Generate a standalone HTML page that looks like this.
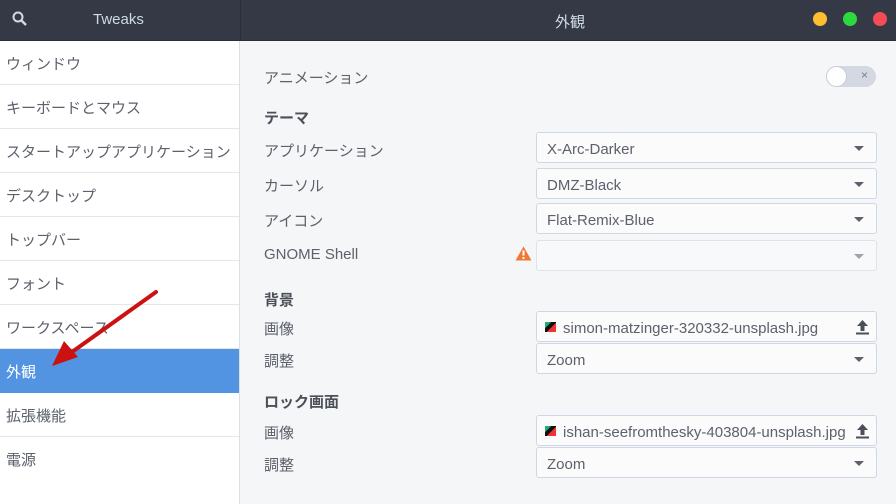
<!DOCTYPE html>
<html><head><meta charset="utf-8"><style>
*{margin:0;padding:0;box-sizing:border-box}
body{width:896px;height:504px;overflow:hidden;font-family:"Liberation Sans","Noto Sans CJK JP",sans-serif;background:#f5f6f7;position:relative;color:#5c616c}
.hd{position:absolute;left:0;top:0;width:896px;height:41px;background:#353945;border-bottom:1px solid #2b2e37}
.hd .sep{position:absolute;left:240px;top:0;width:1px;height:41px;background:#2b2e37}
.t{position:absolute;color:#cfdae7;font-size:15px}
.dot{position:absolute;top:12px;width:14px;height:14px;border-radius:50%}
.side{position:absolute;left:0;top:41px;width:240px;height:463px;background:#fff;border-right:1px solid #dcdfe3}
.row{height:44px;border-bottom:1px solid #e4e6e9;font-size:15px;line-height:44px;padding-left:6px;padding-top:2px;color:#5c616c}
.row.sel{background:#5294e2;color:#fff;border-bottom-color:#5294e2}
.lbl{position:absolute;font-size:15px;color:#5c616c}
.h{position:absolute;font-size:15px;font-weight:bold;color:#4b4f58}
.cb{position:absolute;left:536px;width:341px;height:31px;border:1px solid #cfd6e6;border-radius:3px;background:#fbfbfc;font-size:15px;line-height:29px;padding-top:2px;padding-left:10px;color:#5c616c}
.cb .ar{position:absolute;right:12px;top:13px;width:0;height:0;border-left:5px solid transparent;border-right:5px solid transparent;border-top:5px solid #5c616c}
.fi{position:absolute;left:8px;top:10px;width:11px;height:10px;background:linear-gradient(135deg,#2a7 0 30%,#111 30% 55%,#e33 55%)}
</style></head><body>
<div class="hd"><div class="sep"></div>
<svg style="position:absolute;left:12px;top:11px" width="16" height="16"><circle cx="6" cy="6" r="4.5" fill="none" stroke="#cfdae7" stroke-width="2"/><line x1="9.5" y1="9.5" x2="14" y2="14" stroke="#cfdae7" stroke-width="2.4"/></svg>
<div class="t" style="left:93px;top:11px">Tweaks</div>
<div class="t" style="left:555px;top:11px">外観</div>
<div class="dot" style="left:813px;background:#fdbe2f"></div>
<div class="dot" style="left:843px;background:#2ed93f"></div>
<div class="dot" style="left:873px;background:#f44c56"></div>
</div>
<div class="side">
<div class="row">ウィンドウ</div><div class="row">キーボードとマウス</div><div class="row">スタートアップアプリケーション</div><div class="row">デスクトップ</div><div class="row">トップバー</div><div class="row">フォント</div><div class="row">ワークスペース</div><div class="row sel">外観</div><div class="row">拡張機能</div><div class="row" style="border:0">電源</div>
</div>
<div class="lbl" style="left:264px;top:67px">アニメーション</div>
<div style="position:absolute;left:826px;top:66px;width:50px;height:21px;border-radius:11px;background:#d3d8e3"><div style="position:absolute;left:0;top:0;width:21px;height:21px;border-radius:50%;background:#fff;border:1px solid #c8cdd8"></div><div style="position:absolute;left:35px;top:2px;font-size:12px;color:#7a7f8a">×</div></div>
<div class="h" style="left:264px;top:107px">テーマ</div>
<div class="lbl" style="left:264px;top:140px">アプリケーション</div>
<div class="cb" style="top:132px">X-Arc-Darker<div class="ar"></div></div>
<div class="lbl" style="left:264px;top:175px">カーソル</div>
<div class="cb" style="top:168px">DMZ-Black<div class="ar"></div></div>
<div class="lbl" style="left:264px;top:210px">アイコン</div>
<div class="cb" style="top:203px">Flat-Remix-Blue<div class="ar"></div></div>
<div class="lbl" style="left:264px;top:246px">GNOME Shell</div>
<svg style="position:absolute;left:515px;top:246px" width="17" height="15"><path d="M8.5 0.5L16.5 14.5H0.5Z" fill="#f27835"/><rect x="7.5" y="4.5" width="2" height="5" fill="#fff"/><rect x="7.5" y="11" width="2" height="2" fill="#fff"/></svg>
<div class="cb" style="top:240px;border-color:#dde2ec;background:#f8f9fa"><div class="ar" style="border-top-color:#a0a4ab"></div></div>
<div class="h" style="left:264px;top:289px">背景</div>
<div class="lbl" style="left:264px;top:318px">画像</div>
<div class="cb" style="top:311px;padding-left:26px"><div class="fi"></div>simon-matzinger-320332-unsplash.jpg<svg style="position:absolute;right:6px;top:7px" width="15" height="16"><path d="M7.5 1L13 7H9.5V12H5.5V7H2Z" fill="#4b4f58"/><rect x="1" y="13.5" width="13" height="2" fill="#4b4f58"/></svg></div>
<div class="lbl" style="left:264px;top:350px">調整</div>
<div class="cb" style="top:343px">Zoom<div class="ar"></div></div>
<div class="h" style="left:264px;top:391px">ロック画面</div>
<div class="lbl" style="left:264px;top:422px">画像</div>
<div class="cb" style="top:415px;padding-left:26px"><div class="fi"></div>ishan-seefromthesky-403804-unsplash.jpg<svg style="position:absolute;right:6px;top:7px" width="15" height="16"><path d="M7.5 1L13 7H9.5V12H5.5V7H2Z" fill="#4b4f58"/><rect x="1" y="13.5" width="13" height="2" fill="#4b4f58"/></svg></div>
<div class="lbl" style="left:264px;top:454px">調整</div>
<div class="cb" style="top:447px">Zoom<div class="ar"></div></div>
<svg style="position:absolute;left:0;top:0" width="240" height="504"><line x1="156" y1="292" x2="72" y2="352" stroke="#cc1111" stroke-width="4" stroke-linecap="round"/><path d="M52 366L64 341L78 357Z" fill="#cc1111"/></svg>
</body></html>
